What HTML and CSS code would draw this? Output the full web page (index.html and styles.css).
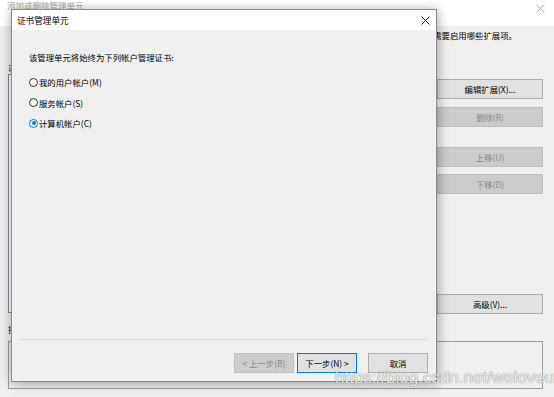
FILE: index.html
```html
<!DOCTYPE html>
<html lang="zh-CN">
<head>
    <meta charset="UTF-8">
    <meta name="viewport" content="width=device-width, initial-scale=1.0">
    <title>证书管理单元</title>
    <link rel="stylesheet" href="styles.css">
</head>
<body>
    <div class="desktop">
        <!-- 后面的窗口：添加或删除管理单元 -->
        <div class="bg-window">
            <div class="bg-titlebar">
                <span class="bg-title">添加或删除管理单元</span>
                <svg class="bg-close" width="9" height="9" viewBox="0 0 9 9">
                    <path d="M0.5 0.5 L8.5 8.5 M8.5 0.5 L0.5 8.5" stroke="#b0b0b0" stroke-width="1" fill="none"/>
                </svg>
            </div>
            <div class="bg-body">
                <p class="bg-intro">为此控制台选择可用的管理单元并配置所选的一组管理单元。对于可扩展的管理单元，可以配置需要启用哪些扩展项。</p>
                <div class="bg-main">
                    <div class="bg-left">
                        <div class="bg-label">可用的管理单元(S):</div>
                        <div class="bg-list"></div>
                    </div>
                    <div class="bg-buttons">
                        <button class="btn">编辑扩展(X)...</button>
                        <button class="btn btn-disabled gap-s">删除(R)</button>
                        <button class="btn btn-disabled gap-m">上移(U)</button>
                        <button class="btn btn-disabled gap-xs">下移(D)</button>
                        <button class="btn gap-l">高级(V)...</button>
                    </div>
                </div>
                <div class="bg-desc-label">描述:</div>
                <div class="bg-desc"></div>
            </div>
        </div>

        <!-- 前面的对话框：证书管理单元 -->
        <div class="dialog">
            <div class="dialog-titlebar">
                <span class="dialog-title">证书管理单元</span>
                <svg class="dialog-close" width="9" height="9" viewBox="0 0 9 9">
                    <path d="M0.5 0.5 L8.5 8.5 M8.5 0.5 L0.5 8.5" stroke="#222" stroke-width="1" fill="none"/>
                </svg>
            </div>
            <div class="dialog-body">
                <p class="prompt">该管理单元将始终为下列帐户管理证书:</p>
                <div class="options">
                    <label class="option"><input type="radio" name="account"> 我的用户帐户(M)</label>
                    <label class="option"><input type="radio" name="account"> 服务帐户(S)</label>
                    <label class="option"><input type="radio" name="account" checked> 计算机帐户(C)</label>
                </div>
            </div>
            <div class="dialog-footer">
                <div class="separator"></div>
                <div class="footer-buttons">
                    <button class="btn btn-disabled">&lt; 上一步(B)</button>
                    <button class="btn btn-default">下一步(N) &gt;</button>
                    <button class="btn btn-cancel">取消</button>
                </div>
            </div>
        </div>

        <div class="watermark">https://blog.csdn.net/weloveut</div>
    </div>
</body>
</html>
```

FILE: styles.css
```css
* {
    box-sizing: border-box;
}
body {
    margin: 0;
    font-family: "Noto Sans CJK SC", "Liberation Sans", sans-serif;
    color: #000;
    background-color: #f0f0f0;
}
.desktop {
    position: relative;
    width: 554px;
    height: 397px;
    overflow: hidden;
}

/* 后面的窗口 */
.bg-window {
    position: absolute;
    left: 0;
    top: 0;
    width: 554px;
    height: 397px;
    background: #f0f0f0;
}
.bg-titlebar {
    height: 26px;
    background: #ffffff;
    display: flex;
    justify-content: space-between;
    align-items: flex-start;
    padding: 0 9px 0 7px;
}
.bg-title {
    font-size: 8.5px;
    line-height: 10px;
    color: #a8a8a8;
}
.bg-close {
    margin-top: 4px;
}
.bg-body {
    padding: 0 11px 0 8px;
}
.bg-intro {
    margin: 0;
    height: 37px;
    padding-top: 4px;
    font-size: 8.4px;
    line-height: 10px;
    white-space: nowrap;
    text-align: right;
    padding-right: 26px;
    overflow: hidden;
}
.bg-main {
    display: grid;
    grid-template-columns: 1fr 106px;
    column-gap: 8px;
}
.bg-label {
    font-size: 8.4px;
    line-height: 10px;
    height: 11px;
}
.bg-list {
    height: 239px;
    background: #ffffff;
    border: 1px solid #828790;
}
.bg-buttons {
    display: flex;
    flex-direction: column;
    padding-top: 16px;
}
.gap-xs { margin-top: 7px; }
.gap-s { margin-top: 8px; }
.gap-m { margin-top: 20px; }
.gap-l { margin-top: 100px; }
.bg-desc-label {
    margin-top: 10px;
    font-size: 8.4px;
    line-height: 10px;
    height: 17px;
}
.bg-desc {
    height: 48px;
    border: 1px solid #a0a0a0;
    background: #f0f0f0;
}

/* 按钮 */
.btn {
    height: 20px;
    padding: 0;
    font-family: inherit;
    font-size: 8.4px;
    line-height: 18px;
    color: #000;
    background: #e1e1e1;
    border: 1px solid #adadad;
    border-radius: 0;
}
.btn-disabled {
    background: #cccccc;
    border-color: #bfbfbf;
    color: #8a8a8a;
}
.btn-default {
    border-color: #0078d7;
}

/* 对话框 */
.dialog {
    position: absolute;
    left: 11px;
    top: 9px;
    width: 426px;
    height: 373px;
    display: flex;
    flex-direction: column;
    background: #f0f0f0;
    border: 1px solid #8c8c8c;
    box-shadow: 0 0 10px rgba(0, 0, 0, 0.22), 2px 4px 12px rgba(0, 0, 0, 0.15);
}
.dialog-titlebar {
    height: 20px;
    background: #ffffff;
    display: flex;
    justify-content: space-between;
    align-items: center;
    padding: 0 6px 0 5px;
}
.dialog-title {
    font-size: 8.6px;
    line-height: 10px;
}
.dialog-body {
    flex: 1;
    padding: 22px 0 0 17px;
}
.prompt {
    margin: 0;
    font-size: 8.4px;
    line-height: 10px;
}
.options {
    margin-top: 10px;
    display: flex;
    flex-direction: column;
}
.option {
    display: flex;
    align-items: center;
    height: 20.6px;
    font-size: 8.4px;
    line-height: 10px;
}
.option input {
    appearance: none;
    -webkit-appearance: none;
    width: 9px;
    height: 9px;
    margin: 0 1px 0 0;
    border: 1px solid #333333;
    border-radius: 50%;
    background: #ffffff;
    display: grid;
    place-content: center;
}
.option input:checked {
    border-color: #0078d7;
}
.option input:checked::before {
    content: "";
    width: 4px;
    height: 4px;
    border-radius: 50%;
    background: #0078d7;
}
.dialog-footer {
    padding: 0 8px 8px 8px;
}
.separator {
    height: 1px;
    background: #d8d8d8;
    margin-right: 1px;
}
.footer-buttons {
    display: flex;
    justify-content: flex-end;
    margin-top: 13px;
}
.footer-buttons .btn {
    width: 60px;
}
.footer-buttons .btn-default {
    margin-left: 3px;
}
.footer-buttons .btn-cancel {
    margin-left: 11px;
}

/* 水印 */
.watermark {
    position: absolute;
    left: 335px;
    top: 368px;
    font-family: "Liberation Sans", sans-serif;
    font-size: 17px;
    line-height: 20px;
    color: rgba(255, 255, 255, 0.85);
    text-shadow: 0 0 1px rgba(0, 0, 0, 0.45), 0 0 2px rgba(0, 0, 0, 0.2);
    white-space: nowrap;
}
```
